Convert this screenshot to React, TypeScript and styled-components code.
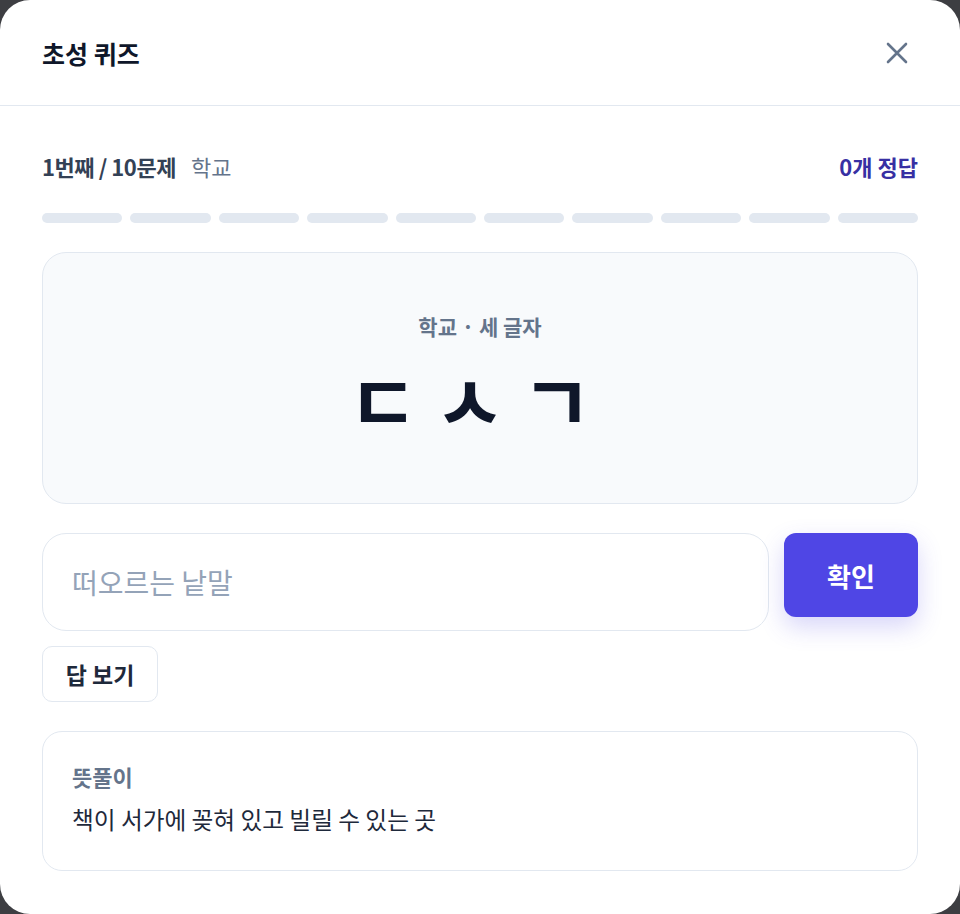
import * as React from 'react';
import styled, { createGlobalStyle } from 'styled-components';

const GlobalStyle = createGlobalStyle`
  html, body {
    margin: 0;
    padding: 0;
    background: #3d3e42;
  }
  body {
    font-family: "Noto Sans CJK KR", "Noto Sans", sans-serif;
    -webkit-font-smoothing: antialiased;
  }
  * {
    box-sizing: border-box;
  }
`;

const Modal = styled.div`
  width: 960px;
  height: 914px;
  background: #fff;
  border-radius: 30px;
  overflow: hidden;
  display: flex;
  flex-direction: column;
`;

const Header = styled.div`
  height: 106px;
  padding: 0 42px;
  display: flex;
  align-items: center;
  justify-content: space-between;
  border-bottom: 1.5px solid #e2e8f0;
`;

const Title = styled.h1`
  margin: 0;
  font-size: 25px;
  font-weight: 700;
  color: #0f172a;
`;

const CloseButton = styled.button`
  width: 32px;
  height: 32px;
  margin-right: 5px;
  padding: 0;
  border: none;
  background: none;
  display: flex;
  align-items: center;
  justify-content: center;
  cursor: pointer;
`;

const Body = styled.div`
  flex: 1;
  padding: 46px 42px 43px;
  display: flex;
  flex-direction: column;
  gap: 29px;
`;

const Group = styled.div<{ $gap: number }>`
  display: flex;
  flex-direction: column;
  align-items: flex-start;
  gap: ${(p) => p.$gap}px;
`;

const MetaRow = styled.div`
  width: 100%;
  height: 28px;
  display: flex;
  align-items: center;
  justify-content: space-between;
`;

const MetaLeft = styled.div`
  display: flex;
  align-items: center;
  gap: 15px;
`;

const Count = styled.span`
  font-size: 22px;
  font-weight: 700;
  color: #334155;
  letter-spacing: -0.02em;
`;

const Category = styled.span`
  font-size: 22px;
  font-weight: 400;
  color: #64748b;
`;

const Score = styled.span`
  font-size: 22px;
  font-weight: 700;
  color: #3730a3;
`;

const Progress = styled.div`
  width: 100%;
  display: grid;
  grid-template-columns: repeat(10, 1fr);
  gap: 8px;
`;

const Segment = styled.div<{ $done?: boolean }>`
  height: 10px;
  border-radius: 5px;
  background: ${(p) => (p.$done ? '#4f46e5' : '#e2e8f0')};
`;

const QuestionCard = styled.div`
  height: 252px;
  background: #f8fafc;
  border: 1.5px solid #e2e8f0;
  border-radius: 24px;
  display: flex;
  flex-direction: column;
  align-items: center;
  justify-content: center;
  padding-bottom: 8px;
  gap: 20px;
`;

const Hint = styled.div`
  font-size: 21px;
  font-weight: 700;
  color: #64748b;
  line-height: 28px;
`;

const Chosung = styled.div`
  font-size: 77px;
  font-weight: 700;
  color: #0f172a;
  line-height: 77px;
  letter-spacing: 16px;
  padding-right: 4px;
`;

const InputRow = styled.div`
  width: 100%;
  display: flex;
  align-items: flex-start;
  gap: 15px;
`;

const AnswerInput = styled.input`
  flex: 1;
  min-width: 0;
  height: 98px;
  padding: 0 29px;
  border: 1.5px solid #e2e8f0;
  border-radius: 24px;
  background: #fff;
  font-family: inherit;
  font-size: 28px;
  color: #0f172a;
  outline: none;

  &::placeholder {
    color: #94a3b8;
  }
`;

const SubmitButton = styled.button`
  width: 134px;
  height: 84px;
  border: none;
  border-radius: 12px;
  background: #4f46e5;
  color: #fff;
  font-family: inherit;
  font-size: 26px;
  font-weight: 700;
  box-shadow: 0 10px 24px rgba(79, 70, 229, 0.22);
  cursor: pointer;
`;

const RevealButton = styled.button`
  width: 116px;
  height: 56px;
  padding: 0;
  border: 1.5px solid #e2e8f0;
  border-radius: 10px;
  background: #fff;
  color: #1e293b;
  font-family: inherit;
  font-size: 23px;
  font-weight: 700;
  cursor: pointer;
`;

const Explain = styled.div`
  height: 140px;
  padding: 29px 29px;
  border: 1.5px solid #e2e8f0;
  border-radius: 20px;
  background: #fff;
  display: flex;
  flex-direction: column;
  gap: 12px;
`;

const ExplainLabel = styled.div`
  font-size: 22px;
  font-weight: 700;
  color: #64748b;
  line-height: 30px;
`;

const ExplainText = styled.div`
  font-size: 23.7px;
  color: #1e293b;
  line-height: 32px;
`;

const CloseIcon = () => (
  <svg width="22" height="22" viewBox="0 0 22 22" fill="none">
    <path d="M2 2L20 20M20 2L2 20" stroke="#64748b" strokeWidth="2.6" strokeLinecap="round" />
  </svg>
);

const App = () => {
  const total = 10;
  const current = 0;
  return (
    <>
      <GlobalStyle />
      <Modal>
        <Header>
          <Title>초성 퀴즈</Title>
          <CloseButton aria-label="닫기">
            <CloseIcon />
          </CloseButton>
        </Header>
        <Body>
          <Group $gap={33}>
            <MetaRow>
              <MetaLeft>
                <Count>1번째 / {total}문제</Count>
                <Category>학교</Category>
              </MetaLeft>
              <Score>0개 정답</Score>
            </MetaRow>
            <Progress>
              {Array.from({ length: total }).map((_, i) => (
                <Segment key={i} $done={i < current} />
              ))}
            </Progress>
          </Group>
          <QuestionCard>
            <Hint>학교 · 세 글자</Hint>
            <Chosung>ㄷㅅㄱ</Chosung>
          </QuestionCard>
          <Group $gap={15}>
            <InputRow>
              <AnswerInput placeholder="떠오르는 낱말" />
              <SubmitButton>확인</SubmitButton>
            </InputRow>
            <RevealButton>답 보기</RevealButton>
          </Group>
          <Explain>
            <ExplainLabel>뜻풀이</ExplainLabel>
            <ExplainText>책이 서가에 꽂혀 있고 빌릴 수 있는 곳</ExplainText>
          </Explain>
        </Body>
      </Modal>
    </>
  );
};

export default App;
